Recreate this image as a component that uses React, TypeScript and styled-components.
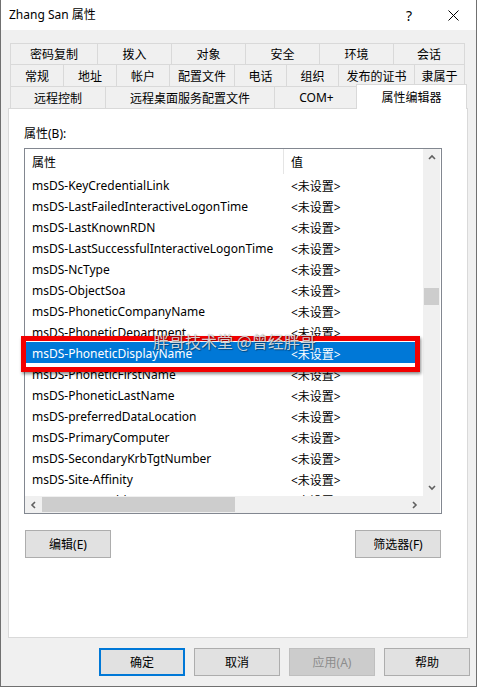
import React from "react";
import styled, { createGlobalStyle, css } from "styled-components";

const Global = createGlobalStyle`
  html, body { margin: 0; padding: 0; background: #f0f0f0; }
  body { font-family: "Noto Sans", "Noto Sans CJK SC", sans-serif; font-size: 12px; color: #000; }
  * { box-sizing: border-box; }
`;

const Window = styled.div`
  position: relative;
  width: 477px;
  height: 687px;
  background: #f0f0f0;
  border-left: 1px solid #707070;
  border-right: 1px solid #707070;
  border-bottom: 1px solid #707070;
  display: flex;
  flex-direction: column;
  overflow: hidden;
`;

const TitleBar = styled.div`
  height: 30px;
  flex: none;
  background: #ffffff;
  display: flex;
  align-items: center;
  padding-left: 8px;
`;

const TitleText = styled.div`
  flex: 1;
  font-size: 12px;
  line-height: 16px;
`;

const TitleButton = styled.div<{ $shift?: number }>`
  width: 46px;
  height: 30px;
  display: flex;
  align-items: center;
  justify-content: center;
  font-size: 14px;
  padding-left: ${(p) => p.$shift ?? 0}px;
`;

const Body = styled.div`
  flex: 1;
  display: flex;
  flex-direction: column;
  padding: 13px 8px 0 7px;
`;

const TabStrip = styled.div`
  display: flex;
  flex-direction: column;
  padding-left: 2px;
`;

const TabRow = styled.div<{ $h: number }>`
  display: flex;
  height: ${(p) => p.$h}px;
`;

const Tab = styled.div<{ $w: number; $last?: boolean; $active?: boolean }>`
  width: ${(p) => p.$w}px;
  flex: none;
  display: flex;
  align-items: center;
  justify-content: center;
  font-size: 12px;
  border-top: 1px solid #d9d9d9;
  border-left: 1px solid #d9d9d9;
  ${(p) => p.$last && css`border-right: 1px solid #d9d9d9;`}
  background: #f0f0f0;
  white-space: nowrap;
  ${(p) =>
    p.$active &&
    css`
      position: relative;
      z-index: 2;
      background: #ffffff;
      border-right: 1px solid #d9d9d9;
      margin: -2px -2px -1px -2px;
      width: ${p.$w + 4}px;
      padding-bottom: 1px;
    `}
`;

const Panel = styled.div`
  height: 530px;
  background: #ffffff;
  border: 1px solid #d9d9d9;
  padding: 17px 0 0 15px;
  display: flex;
  flex-direction: column;
`;

const Label = styled.div`
  height: 16px;
  line-height: 16px;
  font-size: 12px;
  margin-bottom: 6px;
`;

const ListBox = styled.div`
  width: 418px;
  height: 366px;
  border: 1px solid #828790;
  background: #ffffff;
  display: grid;
  grid-template-columns: 398px 17px;
  grid-template-rows: 347px 17px;
`;

const ListContent = styled.div`
  overflow: hidden;
  display: flex;
  flex-direction: column;
`;

const HeaderRow = styled.div`
  height: 25px;
  flex: none;
  display: flex;
  align-items: stretch;
`;

const HeaderCell = styled.div<{ $w?: number }>`
  ${(p) => (p.$w ? css`width: ${p.$w}px;` : css`flex: 1;`)}
  display: flex;
  align-items: center;
  padding-left: 7px;
  padding-top: 1px;
  font-size: 12px;
  ${(p) => p.$w && css`border-right: 1px solid #e5e5e5;`}
`;

const Row = styled.div<{ $selected?: boolean }>`
  height: 21px;
  flex: none;
  width: 391px;
  display: flex;
  align-items: center;
  padding-top: 2px;
  white-space: nowrap;
  ${(p) =>
    p.$selected &&
    css`
      background: #0078d7;
      color: #ffffff;
    `}
`;

const NameCell = styled.div`
  width: 259px;
  padding-left: 7px;
  overflow: hidden;
  font-size: 12px;
`;

const ValueCell = styled.div`
  padding-left: 7px;
  font-size: 12px;
`;

const VScroll = styled.div`
  background: #f0f0f0;
  display: flex;
  flex-direction: column;
  align-items: center;
`;

const ArrowBox = styled.div`
  height: 17px;
  width: 17px;
  flex: none;
  display: flex;
  align-items: center;
  justify-content: center;
`;

const VTrack = styled.div`
  flex: 1;
  width: 100%;
  display: flex;
  flex-direction: column;
  align-items: center;
`;

const VThumb = styled.div`
  width: 15px;
  height: 17px;
  background: #cdcdcd;
  margin-top: 122px;
`;

const HScroll = styled.div`
  background: #f0f0f0;
  display: flex;
  align-items: center;
`;

const HTrack = styled.div`
  flex: 1;
  height: 100%;
  display: flex;
  align-items: center;
`;

const HThumb = styled.div`
  width: 193px;
  height: 15px;
  background: #cdcdcd;
`;

const Corner = styled.div`
  background: #f0f0f0;
`;

const PanelButtons = styled.div`
  width: 418px;
  display: flex;
  justify-content: space-between;
  padding: 0 1px;
  margin-top: 16px;
`;

const Button = styled.div<{ $default?: boolean; $disabled?: boolean }>`
  width: 86px;
  height: 28px;
  display: flex;
  align-items: center;
  justify-content: center;
  background: #e1e1e1;
  border: 1px solid #adadad;
  font-size: 12px;
  ${(p) =>
    p.$default &&
    css`
      border: 2px solid #0078d7;
    `}
  ${(p) =>
    p.$disabled &&
    css`
      background: #cccccc;
      border-color: #bfbfbf;
      color: #8d8d8d;
    `}
`;

const DialogButtons = styled.div`
  display: flex;
  justify-content: flex-end;
  gap: 9px;
  margin-top: 10px;
  margin-right: -2px;
`;

const Highlight = styled.div`
  position: absolute;
  left: 20px;
  top: 336px;
  width: 399px;
  height: 36px;
  border: 5px solid #f20000;
  box-shadow: 1px 2px 3px rgba(0, 0, 0, 0.45);
  pointer-events: none;
  z-index: 5;
`;

const Watermark = styled.div`
  position: absolute;
  left: 152px;
  top: 331px;
  font-size: 16px;
  line-height: 20px;
  font-family: "Noto Sans CJK SC", sans-serif;
  color: rgba(255, 255, 255, 0.8);
  text-shadow: 0 0 1px rgba(0, 0, 0, 0.55), 1px 1px 1px rgba(0, 0, 0, 0.35);
  white-space: pre;
  z-index: 6;
  pointer-events: none;
`;

const Chevron: React.FC<{ dir: "up" | "down" | "left" | "right" }> = ({ dir }) => {
  const pts: Record<string, string> = {
    up: "1,5 4,2 7,5",
    down: "1,2 4,5 7,2",
    left: "5,1 2,4 5,7",
    right: "2,1 5,4 2,7",
  };
  return (
    <svg width="8" height="8" viewBox="0 0 8 8">
      <polyline points={pts[dir]} fill="none" stroke="#606060" strokeWidth="1.6" />
    </svg>
  );
};

const CloseIcon = () => (
  <svg width="11" height="11" viewBox="0 0 11 11">
    <line x1="0.5" y1="0.5" x2="10.5" y2="10.5" stroke="#000" strokeWidth="1" />
    <line x1="10.5" y1="0.5" x2="0.5" y2="10.5" stroke="#000" strokeWidth="1" />
  </svg>
);

const row1: [string, number][] = [
  ["密码复制", 87],
  ["拨入", 74],
  ["对象", 74],
  ["安全", 74],
  ["环境", 74],
  ["会话", 72],
];
const row2: [string, number][] = [
  ["常规", 53],
  ["地址", 53],
  ["帐户", 53],
  ["配置文件", 65],
  ["电话", 52],
  ["组织", 52],
  ["发布的证书", 76],
  ["隶属于", 51],
];
const row3: [string, number][] = [
  ["远程控制", 95],
  ["远程桌面服务配置文件", 169],
  ["COM+", 84],
  ["属性编辑器", 107],
];

const attrs = [
  "msDS-KeyCredentialLink",
  "msDS-LastFailedInteractiveLogonTime",
  "msDS-LastKnownRDN",
  "msDS-LastSuccessfulInteractiveLogonTime",
  "msDS-NcType",
  "msDS-ObjectSoa",
  "msDS-PhoneticCompanyName",
  "msDS-PhoneticDepartment",
  "msDS-PhoneticDisplayName",
  "msDS-PhoneticFirstName",
  "msDS-PhoneticLastName",
  "msDS-preferredDataLocation",
  "msDS-PrimaryComputer",
  "msDS-SecondaryKrbTgtNumber",
  "msDS-Site-Affinity",
  "msDS-SourceObjectDN",
];

export default function App() {
  return (
    <>
      <Global />
      <Window>
        <TitleBar>
          <TitleText>Zhang San 属性</TitleText>
          <TitleButton $shift={4}>?</TitleButton>
          <TitleButton>
            <CloseIcon />
          </TitleButton>
        </TitleBar>
        <Body>
          <TabStrip>
            <TabRow $h={21}>
              {row1.map(([t, w], i) => (
                <Tab key={t} $w={w} $last={i === row1.length - 1}>
                  {t}
                </Tab>
              ))}
            </TabRow>
            <TabRow $h={22}>
              {row2.map(([t, w], i) => (
                <Tab key={t} $w={w} $last={i === row2.length - 1}>
                  {t}
                </Tab>
              ))}
            </TabRow>
            <TabRow $h={22}>
              {row3.map(([t, w], i) => (
                <Tab key={t} $w={w} $last={i === row3.length - 1} $active={i === row3.length - 1}>
                  {t}
                </Tab>
              ))}
            </TabRow>
          </TabStrip>
          <Panel>
            <Label>属性(B):</Label>
            <ListBox>
              <ListContent>
                <HeaderRow>
                  <HeaderCell $w={259}>属性</HeaderCell>
                  <HeaderCell>值</HeaderCell>
                </HeaderRow>
                {attrs.map((a) => (
                  <Row key={a} $selected={a === "msDS-PhoneticDisplayName"}>
                    <NameCell>{a}</NameCell>
                    <ValueCell>&lt;未设置&gt;</ValueCell>
                  </Row>
                ))}
              </ListContent>
              <VScroll>
                <ArrowBox>
                  <Chevron dir="up" />
                </ArrowBox>
                <VTrack>
                  <VThumb />
                </VTrack>
                <ArrowBox>
                  <Chevron dir="down" />
                </ArrowBox>
              </VScroll>
              <HScroll>
                <ArrowBox>
                  <Chevron dir="left" />
                </ArrowBox>
                <HTrack>
                  <HThumb />
                </HTrack>
                <ArrowBox>
                  <Chevron dir="right" />
                </ArrowBox>
              </HScroll>
              <Corner />
            </ListBox>
            <PanelButtons>
              <Button>编辑(E)</Button>
              <Button>筛选器(F)</Button>
            </PanelButtons>
          </Panel>
          <DialogButtons>
            <Button $default>确定</Button>
            <Button>取消</Button>
            <Button $disabled>应用(A)</Button>
            <Button>帮助</Button>
          </DialogButtons>
        </Body>
        <Highlight />
        <Watermark>胖哥技术堂 @曾经胖哥</Watermark>
      </Window>
    </>
  );
}
